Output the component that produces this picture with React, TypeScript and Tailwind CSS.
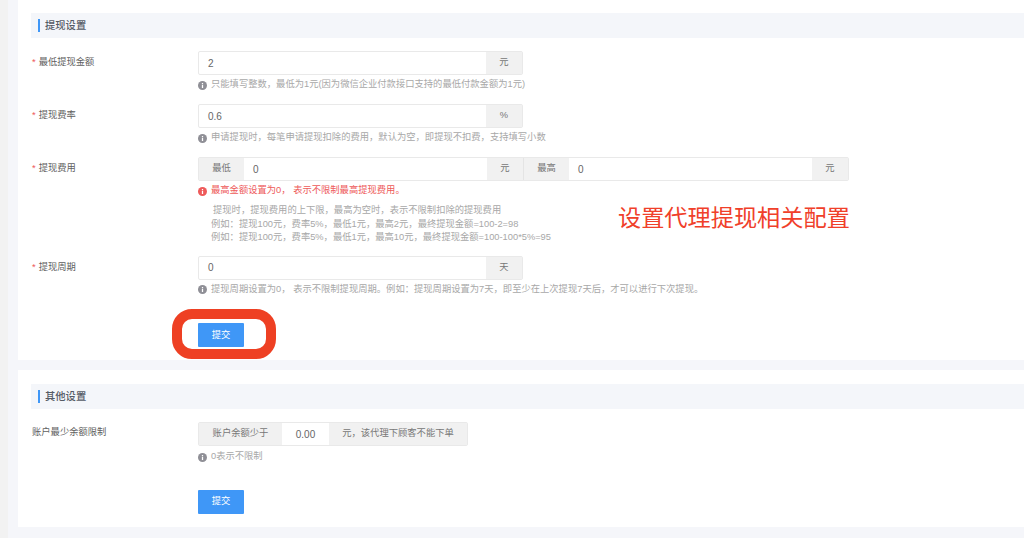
import { ReactNode } from 'react';

const addon = 'flex items-center justify-center bg-[#f1f1f1] text-[9.3px] text-[#777]';

function InfoIcon({ red }: { red?: boolean }) {
  return (
    <svg width="9" height="9" viewBox="0 0 10 10" className="shrink-0">
      <circle cx="5" cy="5" r="5" fill={red ? '#ee5a5a' : '#8f8f96'} />
      <rect x="4.3" y="4.2" width="1.4" height="3.6" fill="#fff" />
      <rect x="4.3" y="2.2" width="1.4" height="1.3" fill="#fff" />
    </svg>
  );
}

function Hint({ children, red }: { children: ReactNode; red?: boolean }) {
  return (
    <div className={`flex items-center gap-[4px] h-[14px] text-[9.3px] ${red ? 'text-[#ee5a5a]' : 'text-[#a8a8a8]'}`}>
      <InfoIcon red={red} />
      <span className="whitespace-nowrap">{children}</span>
    </div>
  );
}

function Label({ text, required }: { text: string; required?: boolean }) {
  return (
    <div className="w-[166px] shrink-0 text-[9.3px] text-[#5f5f5f] leading-[22px] whitespace-nowrap">
      {required && <span className="text-[#ee5a5a] mr-[3px]">*</span>}
      {text}
    </div>
  );
}

function InputGroup({ value, unit }: { value: string; unit: string }) {
  return (
    <div className="flex w-[325px] h-[24px] border border-[#e9e9e9] rounded-[2px]">
      <div className="flex-1 flex items-center pl-[9px] text-[10px] text-[#666]">{value}</div>
      <div className={`${addon} w-[36px]`}>{unit}</div>
    </div>
  );
}

function SectionTitle({ text }: { text: string }) {
  return (
    <div className="flex items-center h-[25px] ml-[13px] bg-[#f4f6fa] pl-[7px]">
      <div className="w-[2px] h-[13px] bg-[#3f97f7]" />
      <span className="ml-[5px] text-[10.3px] font-medium text-[#555b66]">{text}</span>
    </div>
  );
}

function SubmitButton() {
  return (
    <button className="w-[46px] h-[24px] bg-[#3f97f7] text-white text-[9.3px] rounded-[1px]">提交</button>
  );
}

export default function App() {
  return (
    <div
      className="relative h-[538px] w-[1024px] overflow-hidden bg-[#f5f6fa] pl-[18px]"
      style={{ fontFamily: '"Liberation Sans", "Noto Sans CJK SC", sans-serif' }}
    >
      <div className="absolute left-0 top-0 h-full w-[8px] bg-[#f2f2f2]" />

      {/* 提现设置 */}
      <div className="h-[360px] bg-white pt-[13px]">
        <SectionTitle text="提现设置" />

        <div className="flex ml-[14px] mt-[13px]">
          <Label text="最低提现金额" required />
          <div>
            <InputGroup value="2" unit="元" />
            <div className="mt-[3px]">
              <Hint>只能填写整数，最低为1元(因为微信企业付款接口支持的最低付款金额为1元)</Hint>
            </div>
          </div>
        </div>

        <div className="flex ml-[14px] mt-[12px]">
          <Label text="提现费率" required />
          <div>
            <InputGroup value="0.6" unit="%" />
            <div className="mt-[3px]">
              <Hint>申请提现时，每笔申请提现扣除的费用，默认为空，即提现不扣费，支持填写小数</Hint>
            </div>
          </div>
        </div>

        <div className="flex ml-[14px] mt-[12px]">
          <Label text="提现费用" required />
          <div>
            <div className="flex w-[651px] h-[24px] border border-[#e9e9e9] rounded-[2px]">
              <div className={`${addon} w-[45px]`}>最低</div>
              <div className="flex-1 flex items-center pl-[9px] text-[10px] text-[#666]">0</div>
              <div className={`${addon} w-[36px]`}>元</div>
              <div className={`${addon} w-[46px] border-l border-[#e4e4e4]`}>最高</div>
              <div className="w-[243px] flex items-center pl-[9px] text-[10px] text-[#666]">0</div>
              <div className={`${addon} w-[36px]`}>元</div>
            </div>
            <div className="mt-[3px]">
              <Hint red>最高金额设置为0， 表示不限制最高提现费用。</Hint>
            </div>
            <div className="mt-[6px] text-[9.3px] leading-[13.5px] text-[#a8a8a8] pl-[13px] whitespace-nowrap">
              <div className="pl-[2px]">提现时，提现费用的上下限，最高为空时，表示不限制扣除的提现费用</div>
              <div>例如：提现100元，费率5%，最低1元，最高2元，最终提现金额=100-2=98</div>
              <div>例如：提现100元，费率5%，最低1元，最高10元，最终提现金额=100-100*5%=95</div>
            </div>
          </div>
        </div>

        <div className="flex ml-[14px] mt-[11px]">
          <Label text="提现周期" required />
          <div>
            <InputGroup value="0" unit="天" />
            <div className="mt-[3px]">
              <Hint>提现周期设置为0， 表示不限制提现周期。例如：提现周期设置为7天，即至少在上次提现7天后，才可以进行下次提现。</Hint>
            </div>
          </div>
        </div>

        <div className="ml-[180px] mt-[24px]">
          <SubmitButton />
        </div>
      </div>

      {/* 其他设置 */}
      <div className="h-[157px] mt-[10px] bg-white pt-[14px]">
        <SectionTitle text="其他设置" />

        <div className="flex ml-[14px] mt-[13px]">
          <div className="w-[166px] shrink-0 text-[9.3px] text-[#5f5f5f] leading-[20px] whitespace-nowrap">账户最少余额限制</div>
          <div>
            <div className="flex w-[270px] h-[24px] border border-[#e9e9e9] rounded-[2px]">
              <div className={`${addon} w-[83px]`}>账户余额少于</div>
              <div className="w-[47px] flex items-center justify-center text-[10px] text-[#666]">0.00</div>
              <div className={`${addon} flex-1`}>元，该代理下顾客不能下单</div>
            </div>
            <div className="mt-[4px]">
              <Hint>0表示不限制</Hint>
            </div>
            <div className="mt-[23px]">
              <SubmitButton />
            </div>
          </div>
        </div>
      </div>

      {/* annotations */}
      <div className="absolute left-[172px] top-[309px] w-[104px] h-[50px] rounded-[20px] border-[10px] border-[#ee4023]" />
      <div className="absolute left-[618px] top-[200px] text-[23.2px] leading-[36px] text-[#f0402a] whitespace-nowrap">
        设置代理提现相关配置
      </div>
    </div>
  );
}
